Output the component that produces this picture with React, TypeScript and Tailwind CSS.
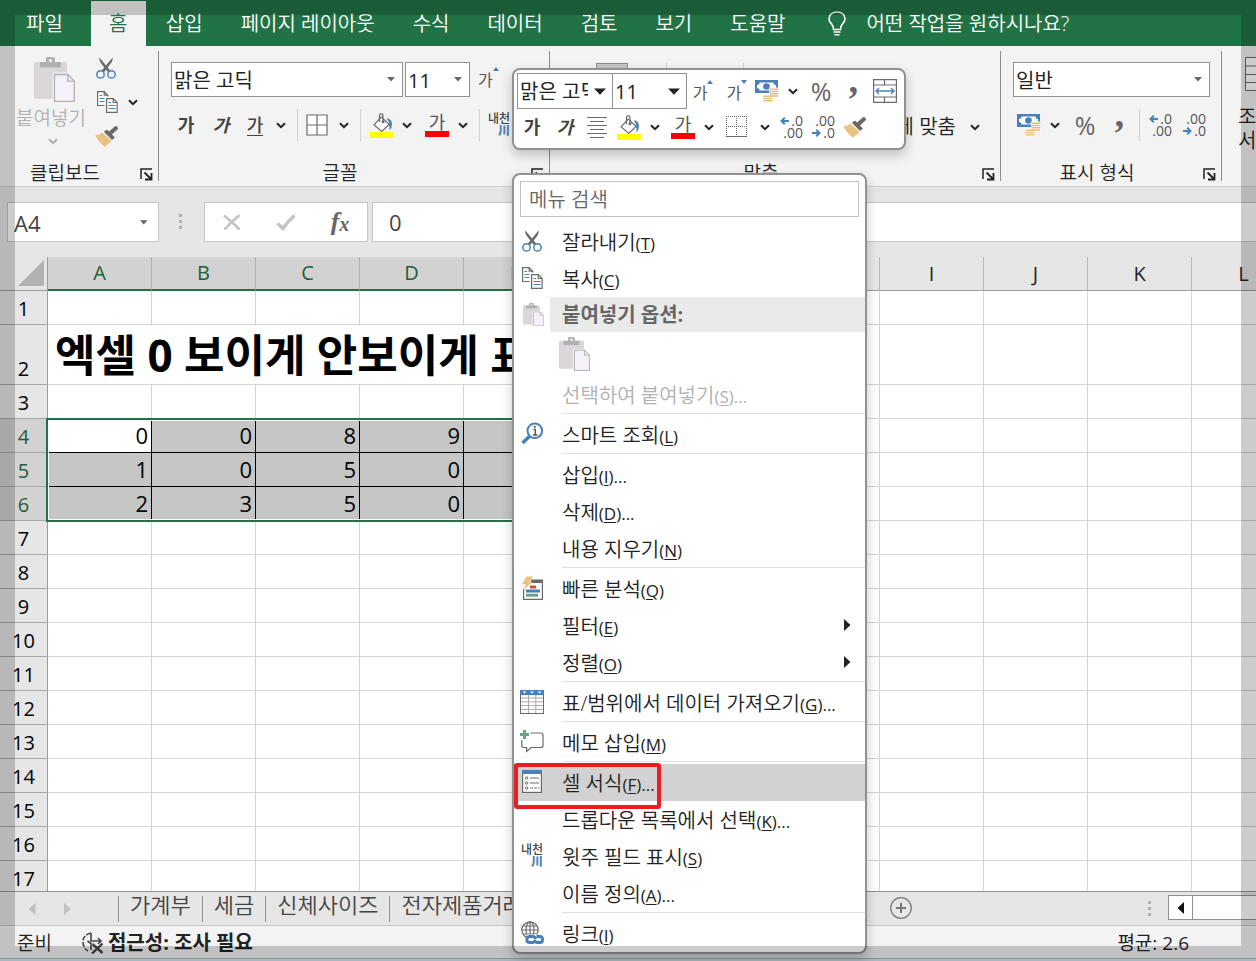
import React from "react";

const BLUE = "#4a80b8";
const GRAY = "#6a6a6a";

/* ---------- icons ---------- */

function Chevron({ className = "text-[#222]" }: { className?: string }) {
  return (
    <svg width="10" height="7" viewBox="0 0 10 7" className={className} aria-hidden="true">
      <path d="M1 1.2 5 5.2 9 1.2" fill="none" stroke="currentColor" strokeWidth="2" />
    </svg>
  );
}

function Triangle({ big = false }: { big?: boolean }) {
  return big ? (
    <svg width="12" height="7" viewBox="0 0 12 7" aria-hidden="true">
      <path d="M0 .5h12L6 6.8z" fill="#222" />
    </svg>
  ) : (
    <svg width="8" height="5" viewBox="0 0 8 5" aria-hidden="true">
      <path d="M0 0h8L4 4.5z" fill="#666" />
    </svg>
  );
}

function Scissors() {
  return (
    <svg width="20" height="22" viewBox="0 0 20 22" aria-hidden="true">
      <path d="M3.4 0.6C3 3 4 5 5.6 7l6.2 8 2.4-1.6z" fill={GRAY} />
      <path d="M16.6 0.6C17 3 16 5 14.4 7l-6.2 8-2.4-1.6z" fill={GRAY} />
      <circle cx="4.5" cy="17.4" r="3.7" fill="none" stroke={BLUE} strokeWidth="1.5" />
      <circle cx="15.5" cy="17.4" r="3.7" fill="none" stroke={BLUE} strokeWidth="1.5" />
    </svg>
  );
}

function Copy() {
  return (
    <svg width="21" height="22" viewBox="0 0 21 22" aria-hidden="true">
      <path d="M7.5 14.5H.6V.6h6.6l3.6 3.6v1.3M7.2.6v3.6h3.6" fill="#fff" stroke={GRAY} strokeWidth="1.2" />
      <path d="M9.6 7.6h6.6l3.9 3.9v9.8H9.6z" fill="#fff" stroke={GRAY} strokeWidth="1.2" />
      <path d="M16.2 7.6v3.9h3.9" fill="none" stroke={GRAY} strokeWidth="1.2" />
      <path d="M2.5 4.5H5M2.5 7.5h5M2.5 10.5h5M11.5 11.5H14M11.5 14.5h7M11.5 17.5h7" stroke={BLUE} strokeWidth="1.2" />
    </svg>
  );
}

function Clipboard({ width, height }: { width: number; height: number }) {
  return (
    <svg width={width} height={height} viewBox="0 0 41 45" aria-hidden="true">
      <rect x="0" y="5" width="33" height="37" rx="1.5" fill="#dad6da" />
      <path d="M6 5h6V1.5Q12 0 13.5 0h6Q21 0 21 1.5V5h6v5.500H6z" fill="#b1b1b1" />
      <circle cx="16.5" cy="3.6" r="1.6" fill="#f3f3f3" />
      <path d="M18.500 15.500H35l6 6V45H18.500z" fill="#f3f3f3" />
      <path d="M20.500 17.500h13.2l6.600 6.600v20.200H20.500z" fill="#f6f1f8" stroke="#b1b1b1" strokeWidth="1.300" />
      <path d="M33.700 17.500v6.600h6.600" fill="none" stroke="#b1b1b1" strokeWidth="1.300" />
    </svg>
  );
}

function Brush() {
  return (
    <svg width="23" height="21" viewBox="0 0 23 21" aria-hidden="true">
      <path d="M.3 9.200Q4 9.500 7.500 6.800L16.700 15 9.800 20.700Q4 16.500.3 9.200z" fill="#ebc27d" />
      <path d="M8.800 5.800 12 3.400l8 8-3 2.600z" fill={GRAY} />
      <path d="M15 7.500 20.800 2.300" stroke={GRAY} strokeWidth="4.200" strokeLinecap="round" />
    </svg>
  );
}

function Borders() {
  return (
    <svg width="22" height="22" viewBox="0 0 22 22" aria-hidden="true">
      <path d="M1 1h20v20H1zM11 1v20M1 11h20" fill="#fff" stroke={GRAY} strokeWidth="1.200" />
    </svg>
  );
}

function DottedBorders() {
  return (
    <svg width="22" height="22" viewBox="0 0 22 22" shapeRendering="crispEdges" aria-hidden="true">
      <path d="M0 .5h21M0 10.500h21M.5 0v20M10.500 0v20M20.500 0v20" stroke="#666" strokeDasharray="1 1" />
      <path d="M0 20.500h21" stroke={GRAY} />
    </svg>
  );
}

function FillColor() {
  return (
    <svg width="24" height="25" viewBox="0 0 24 25" aria-hidden="true">
      <path d="M4 11.800 11.200 4l8 7.300-7.500 7.200z" fill="#fff" stroke={GRAY} strokeWidth="1.200" />
      <path d="M9.500 9V2Q9.500.8 11.200.8T13 2v7" fill="none" stroke={GRAY} strokeWidth="1.200" />
      <circle cx="13" cy="8.800" r="1.500" fill={GRAY} />
      <path d="M16.500 5Q22 6 22 11q0 4-2.500 6.500.5-4-1-6.500l1-1z" fill={BLUE} />
      <rect x="0" y="19" width="24" height="6" fill="#ff0" />
    </svg>
  );
}

function Cash() {
  return (
    <svg width="24" height="23" viewBox="0 0 24 23" aria-hidden="true">
      <rect x="0" y="0" width="23" height="13" fill={BLUE} />
      <path d="M4.500 2.500h14q0 2.500 2.500 2.500v3q-2.500 0-2.500 2.500h-14Q4.500 8 2 8V5q2.500 0 2.500-2.500z" fill="#fff" />
      <circle cx="11.500" cy="6.500" r="3.300" fill={BLUE} />
      <rect x="14" y="7.500" width="10" height="10" fill="#fff" />
      <rect x="7.500" y="14.500" width="10" height="8" fill="#fff" />
      <path d="M15 9.200h8M14.500 11.500h8M15 13.800h8M14.500 16h8M9 16.200h8M8.500 18.500h8M9 20.800h8" stroke="#e8be78" strokeWidth="1.600" strokeLinecap="round" />
    </svg>
  );
}

function MergeCells() {
  return (
    <svg width="24" height="24" viewBox="0 0 24 24" aria-hidden="true">
      <path d="M.6.6h22.800v22.800H.6zM.6 6h22.800M.6 18h22.800M11.500.6V6M11.500 18v5.400" fill="#fff" stroke={GRAY} strokeWidth="1.200" />
      <path d="M3 12h18M6 9l-3 3 3 3M18 9l3 3-3 3" fill="none" stroke={BLUE} strokeWidth="1.400" />
    </svg>
  );
}

function CenterLines() {
  return (
    <svg width="20" height="21" viewBox="0 0 20 21" aria-hidden="true">
      <path d="M0 .5h20M3 4.500h14M0 8.500h20M3 12.500h14M0 16.500h20M3 20.500h14" stroke={GRAY} />
    </svg>
  );
}

function SmartLookup() {
  return (
    <svg width="23" height="23" viewBox="0 0 23 23" aria-hidden="true">
      <circle cx="13.800" cy="8.800" r="7.300" fill="#fff" stroke={BLUE} strokeWidth="2" />
      <path d="M8.500 14.200 1.500 21" stroke={BLUE} strokeWidth="3.600" />
      <path d="M12.500 7.500h1.800v5.500M12 13h4.500" fill="none" stroke="#555" strokeWidth="1.400" />
      <circle cx="13.800" cy="4.800" r="1.100" fill="#555" />
    </svg>
  );
}

function QuickAnalysis() {
  return (
    <svg width="23" height="24" viewBox="0 0 23 24" aria-hidden="true">
      <path d="M2.600 13v10.300h18.800V5" fill="#fff" stroke={GRAY} strokeWidth="1.200" />
      <rect x="10" y="3.500" width="12" height="3.500" fill={GRAY} />
      <rect x="9" y="9.500" width="6" height="3" fill="#d35230" />
      <rect x="5" y="13.500" width="14" height="3" fill={BLUE} />
      <rect x="5" y="17.700" width="12" height="3" fill="#6aa58a" />
      <path d="M5.500.5h6.700L8.300 5.800h3.200L2.300 14.500 5 8.300H1z" fill="#ebc27d" />
    </svg>
  );
}

function TableIcon() {
  return (
    <svg width="24" height="24" viewBox="0 0 24 24" aria-hidden="true">
      <rect x=".5" y=".5" width="23" height="23" fill="#fff" stroke={GRAY} />
      <path d="M1 8h22M1 11.800h22M1 15.600h22M1 19.400h22M8.500 5v18M15.800 5v18" stroke="#aaa" />
      <rect x="0" y="0" width="24" height="5" fill={BLUE} />
      <path d="M2.500 1.500h4l-2 2zM10 1.500h4l-2 2zM17.500 1.500h4l-2 2z" fill="#fff" />
    </svg>
  );
}

function Comment() {
  return (
    <svg width="24" height="23" viewBox="0 0 24 23" aria-hidden="true">
      <path d="M10.500 3H21q2 0 2 2v10.500q0 2-2 2h-10L6.600 21.500v-4H3.800q-2 0-2-2V10" fill="#fff" stroke={GRAY} strokeWidth="1.200" />
      <path d="M4.500 0v9M0 4.500h9" stroke="#6aa58a" strokeWidth="3" />
    </svg>
  );
}

function FormatCells() {
  return (
    <svg width="20" height="23" viewBox="0 0 20 23" aria-hidden="true">
      <rect x=".6" y=".6" width="18.800" height="21.800" fill="#fff" stroke={GRAY} strokeWidth="1.200" />
      <rect x="0" y="0" width="20" height="4" fill={BLUE} />
      <path d="M8 8h9M8 13h9M8 18h3M12 18h3M16 18h1.500" stroke={GRAY} strokeWidth="1.200" />
      <g fill="none" stroke={GRAY}>
        <circle cx="4.700" cy="8" r="1.200" />
        <circle cx="4.700" cy="13" r="1.200" />
        <circle cx="4.700" cy="18" r="1.200" />
      </g>
    </svg>
  );
}

function LinkIcon() {
  return (
    <svg width="23" height="24" viewBox="0 0 23 24" aria-hidden="true">
      <g fill="none" stroke={GRAY} strokeWidth="1.200">
        <circle cx="9" cy="9" r="8.200" fill="#fff" />
        <ellipse cx="9" cy="9" rx="4" ry="8.200" />
        <path d="M9 1v16M1 9h16M2.300 5h13.400M2.300 13h13.400" />
      </g>
      <path d="M5.500 13.500H23V24H5.500z" fill="#fff" />
      <g fill="none" stroke={BLUE} strokeWidth="3">
        <path d="M13 21.500H9q-3.200 0-3.200-3t3.200-3h2.500q2.500 0 3.200 2.500" />
        <path d="M15.500 15.500H19q2.500 0 2.500 3t-2.500 3h-2.500q-2.500 0-3.200-2.500" />
      </g>
    </svg>
  );
}

function Bulb() {
  return (
    <svg width="18" height="25" viewBox="0 0 18 25" aria-hidden="true">
      <path d="M5.500 18.500Q5.500 15 3.300 12.600 1 10.500 1 7.800 1.500 1 9 1t8 6.800q0 2.700-2.300 4.800-2.200 2.400-2.200 5.900z" fill="none" stroke="#fff" strokeWidth="1.600" />
      <path d="M5.500 21h7M6.500 23.700h5" stroke="#fff" strokeWidth="1.500" />
    </svg>
  );
}

function Launcher() {
  return (
    <svg width="13" height="13" viewBox="0 0 13 13" aria-hidden="true">
      <path d="M1 11V1h11" fill="none" stroke="#222" strokeWidth="1.500" />
      <path d="M4.500 4.500 11 11M11.500 5v6.500H5" fill="none" stroke="#222" strokeWidth="1.800" />
    </svg>
  );
}

function Ruby() {
  return (
    <span className="flex w-[22px] flex-col items-end" aria-hidden="true">
      <span className="whitespace-nowrap text-[12px] font-medium leading-[12px] text-[#444]">내천</span>
      <span className="text-[12px] font-black leading-[12px] text-[#4a80b8]">川</span>
    </span>
  );
}

function Arrow({ dir }: { dir: "left" | "right" }) {
  return (
    <svg width="9" height="8" viewBox="0 0 9 8" aria-hidden="true">
      <path d={dir === "left" ? "M9 4H1.500M4.800.7 1.500 4l3.300 3.300" : "M0 4h7.500M4.200.7 7.500 4 4.200 7.300"} fill="none" stroke={BLUE} strokeWidth="2" />
    </svg>
  );
}

function Decimal({ more = false }: { more?: boolean }) {
  return (
    <span className="flex w-6 flex-col items-end text-[14px] font-normal leading-[12px] text-[#555]">
      {more ? (
        <>
          <span className="flex items-center gap-0.5"><Arrow dir="left" />.0</span>
          <span>.00</span>
        </>
      ) : (
        <>
          <span>.00</span>
          <span className="flex items-center gap-0.5"><Arrow dir="right" />.0</span>
        </>
      )}
    </span>
  );
}

function FontColor() {
  return (
    <span className="flex w-6 flex-col items-center">
      <span className="text-[18px] font-normal leading-[18px] text-[#555]">가</span>
      <span className="h-1.5 w-6 bg-[#f00]" />
    </span>
  );
}

function SizeStep({ up = false }: { up?: boolean }) {
  return (
    <span className="flex items-start font-normal text-[#555]">
      <span className="pt-1 text-[16px] leading-[18px]">가</span>
      <svg width="6" height="4" viewBox="0 0 6 4" aria-hidden="true">
        <path d={up ? "M0 4h6L3 0z" : "M0 0h6L3 4z"} fill={BLUE} />
      </svg>
    </span>
  );
}

function Comma() {
  return <span className="h-4 font-['Liberation_Serif',serif] text-[38px] font-bold leading-[32px] text-[#666]">’</span>;
}

/* ---------- controls ---------- */

function Tool({ label, className = "", children }: { label: string; className?: string; children: React.ReactNode }) {
  return (
    <button type="button" aria-label={label} className={`flex h-8 shrink-0 items-center justify-center ${className}`}>
      {children}
    </button>
  );
}

function Divider({ className = "" }: { className?: string }) {
  return <span className={`h-8 w-px shrink-0 bg-[#cfcfcf] ${className}`} />;
}

function Combo({ label, value, options, className = "", big = false }: { label: string; value: string; options: string[]; className?: string; big?: boolean }) {
  return (
    <label className={`grid shrink-0 items-center border border-[#919191] bg-white ${className}`}>
      <select
        aria-label={label}
        defaultValue={value}
        className={`col-start-1 row-start-1 h-full w-full min-w-0 appearance-none overflow-hidden bg-transparent pl-0.5 pt-0.5 text-[20px] font-normal text-[#222] outline-none ${big ? "pr-6" : "pr-5"}`}
      >
        {options.map((o) => <option key={o}>{o}</option>)}
      </select>
      <span className={`pointer-events-none col-start-1 row-start-1 justify-self-end ${big ? "pr-1.5" : "pr-[7px]"}`}>
        <Triangle big={big} />
      </span>
    </label>
  );
}

function Group({ label, className, children, launcher = true }: { label: string; className: string; children: React.ReactNode; launcher?: boolean }) {
  return (
    <section aria-label={label} className={`flex h-[130px] shrink-0 flex-col border-r border-[#8c8c8c] ${className}`}>
      <div className="min-h-0 flex-1">{children}</div>
      <div className="flex h-[18px] items-center">
        <span className="flex-1 whitespace-nowrap pr-2.5 pt-0.5 text-center text-[19px] leading-[18px]">{label}</span>
        {launcher && <button type="button" aria-label={`${label} 설정`} className="self-end pr-[5px]"><Launcher /></button>}
      </div>
    </section>
  );
}

/* ---------- data ---------- */

const TABS_AFTER = ["삽입", "페이지 레이아웃", "수식", "데이터", "검토", "보기", "도움말"];
const COLUMNS = ["A", "B", "C", "D", "E", "F", "G", "H", "I", "J", "K", "L"];
const ROWS = Array.from({ length: 17 }, (_, i) => i + 1);
const VALUES: Record<number, number[]> = { 4: [0, 0, 8, 9], 5: [1, 0, 5, 0], 6: [2, 3, 5, 0] };
const SELECTED_COLUMNS = 7;
const TITLE_SPAN = 7;
const SHEETS = ["가계부", "세금", "신체사이즈", "전자제품거래"];

type Entry =
  | { kind: "item"; text: string; hot: string; more?: boolean; icon?: React.ReactNode; sub?: boolean; off?: boolean; active?: boolean }
  | { kind: "line" }
  | { kind: "paste" };

const MENU: Entry[] = [
  { kind: "item", text: "잘라내기", hot: "T", icon: <Scissors /> },
  { kind: "item", text: "복사", hot: "C", icon: <Copy /> },
  { kind: "paste" },
  { kind: "item", text: "선택하여 붙여넣기", hot: "S", more: true, off: true },
  { kind: "line" },
  { kind: "item", text: "스마트 조회", hot: "L", icon: <SmartLookup /> },
  { kind: "line" },
  { kind: "item", text: "삽입", hot: "I", more: true },
  { kind: "item", text: "삭제", hot: "D", more: true },
  { kind: "item", text: "내용 지우기", hot: "N" },
  { kind: "line" },
  { kind: "item", text: "빠른 분석", hot: "Q", icon: <QuickAnalysis /> },
  { kind: "item", text: "필터", hot: "E", sub: true },
  { kind: "item", text: "정렬", hot: "O", sub: true },
  { kind: "line" },
  { kind: "item", text: "표/범위에서 데이터 가져오기", hot: "G", more: true, icon: <TableIcon /> },
  { kind: "line" },
  { kind: "item", text: "메모 삽입", hot: "M", icon: <Comment /> },
  { kind: "line" },
  { kind: "item", text: "셀 서식", hot: "F", more: true, icon: <FormatCells />, active: true },
  { kind: "item", text: "드롭다운 목록에서 선택", hot: "K", more: true },
  { kind: "item", text: "윗주 필드 표시", hot: "S", icon: <Ruby /> },
  { kind: "item", text: "이름 정의", hot: "A", more: true },
  { kind: "line" },
  { kind: "item", text: "링크", hot: "I", icon: <LinkIcon /> },
];

/* ---------- sections ---------- */

function TabBar() {
  return (
    <nav className="flex h-[46px] shrink-0 overflow-hidden whitespace-nowrap bg-[#217346] pt-px text-white">
      <button type="button" className="ml-1.5 px-5">파일</button>
      <button type="button" className="ml-2 mr-px w-[55px] bg-[#f3f3f3] text-[#217346]">홈</button>
      {TABS_AFTER.map((t) => <button type="button" key={t} className="px-[19px]">{t}</button>)}
      <button type="button" className="ml-6 flex items-center gap-5">
        <Bulb />
        어떤 작업을 원하시나요?
      </button>
    </nav>
  );
}

function Ribbon() {
  return (
    <div className="flex h-[141px] shrink-0 overflow-hidden border-b border-[#cfcfcf] bg-[#f3f3f3] pt-[5px] text-[#222]">
      <Group label="클립보드" className="w-[159px]">
        <div className="flex pl-[15px] pt-1.5">
          <button type="button" className="flex w-[72px] flex-col items-center whitespace-nowrap text-[#b1b1b1]">
            <span className="pl-1.5"><Clipboard width={41} height={45} /></span>
            <span className="text-[19px] leading-[32px]">붙여넣기</span>
            <span className="pl-1 pt-1"><Chevron className="text-[#b1b1b1]" /></span>
          </button>
          <div className="flex flex-col gap-3 pl-2">
            <button type="button" aria-label="잘라내기" className="pl-px"><Scissors /></button>
            <div className="flex items-center gap-2.5">
              <button type="button" aria-label="복사" className="pl-0.5"><Copy /></button>
              <button type="button" aria-label="복사 옵션"><Chevron /></button>
            </div>
            <button type="button" aria-label="서식 복사" className="pt-px"><Brush /></button>
          </div>
        </div>
      </Group>

      <Group label="글꼴" className="w-[391px]">
        <div className="flex items-start gap-0.5 pl-3 pt-[11px]">
          <Combo label="글꼴" value="맑은 고딕" options={["맑은 고딕", "굴림"]} className="h-[35px] w-[232px]" />
          <Combo label="글꼴 크기" value="11" options={["11", "12"]} className="h-[35px] w-[65px]" />
          <Tool label="글꼴 크기 크게" className="ml-1.5"><SizeStep up /></Tool>
        </div>
        <div className="flex items-center pl-3 pt-3">
          <Tool label="굵게" className="w-[30px] text-[18px] font-bold text-[#444]">가</Tool>
          <Tool label="기울임꼴" className="w-10 text-[18px] font-bold italic text-[#444]">가</Tool>
          <Tool label="밑줄" className="w-7"><span className="border-b border-[#444] text-[18px] font-medium leading-[20px] text-[#444]">가</span></Tool>
          <Tool label="밑줄 옵션" className="w-6"><Chevron /></Tool>
          <Divider className="ml-1" />
          <Tool label="테두리" className="w-[38px]"><Borders /></Tool>
          <Tool label="테두리 옵션" className="w-4"><Chevron /></Tool>
          <Divider className="ml-2 mr-1" />
          <Tool label="채우기 색" className="w-[34px]"><FillColor /></Tool>
          <Tool label="채우기 색 옵션" className="w-4"><Chevron /></Tool>
          <Tool label="글꼴 색" className="ml-1 w-9"><FontColor /></Tool>
          <Tool label="글꼴 색 옵션" className="w-4"><Chevron /></Tool>
          <Divider className="ml-2" />
          <Tool label="윗주" className="ml-2"><Ruby /></Tool>
        </div>
      </Group>

      <Group label="맞춤" className="w-[451px]">
        <div className="flex items-start pl-[46px] pt-3">
          <Tool label="위쪽 맞춤" className="w-8 border border-[#8c8c8c] bg-[#c6c6c6]"><CenterLines /></Tool>
          <Divider className="ml-[38px]" />
          <Tool label="방향" className="ml-4 w-8"><CenterLines /></Tool>
          <Divider className="ml-7" />
        </div>
        <div className="flex justify-end pr-5 pt-4">
          <button type="button" className="flex h-8 items-center gap-3.5 whitespace-nowrap">
            병합하고 가운데 맞춤
            <Chevron />
          </button>
        </div>
      </Group>

      <Group label="표시 형식" className="w-[221px]">
        <div className="pl-3 pt-[11px]">
          <Combo label="표시 형식" value="일반" options={["일반", "숫자"]} className="h-[35px] w-[197px]" />
        </div>
        <div className="flex items-center pl-3 pt-3">
          <Tool label="회계 표시 형식" className="w-8"><Cash /></Tool>
          <Tool label="회계 옵션" className="w-5"><Chevron /></Tool>
          <Tool label="백분율" className="w-10 text-[25px] font-normal text-[#666]">%</Tool>
          <Tool label="쉼표 스타일" className="w-7"><Comma /></Tool>
          <Divider className="ml-1.5" />
          <Tool label="자릿수 늘림" className="ml-2"><Decimal more /></Tool>
          <Tool label="자릿수 줄임" className="ml-2.5"><Decimal /></Tool>
        </div>
      </Group>

      <button type="button" className="flex shrink-0 flex-col items-start whitespace-nowrap pl-4 pt-1.5 text-left leading-[24px]">
        <span className="pb-3.5 pl-[7px]">
          <svg width="34" height="34" viewBox="0 0 34 34" aria-hidden="true">
            <path d="M.5.5h33v33H.5zM.5 9h33M.5 17.500h33M.5 25.500h33M17 .5v33" fill="#fff" stroke={GRAY} />
          </svg>
        </span>
        <span>조건부</span>
        <span>서식</span>
      </button>
    </div>
  );
}

function Dots({ className = "" }: { className?: string }) {
  return (
    <span className={`flex flex-col gap-[3px] ${className}`}>
      <span className="size-[3px] bg-[#b0b0b0]" />
      <span className="size-[3px] bg-[#b0b0b0]" />
      <span className="size-[3px] bg-[#b0b0b0]" />
    </span>
  );
}

function FormulaBar() {
  return (
    <div className="flex h-[70px] shrink-0 items-start bg-[#e6e6e6] pl-[7px] pt-[15px] font-normal">
      <div className="flex h-10 w-[152px] shrink-0 items-center border border-[#c6c6c6] bg-white pr-2.5">
        <input aria-label="이름 상자" defaultValue="A4" className="h-full w-full min-w-0 bg-transparent pl-1.5 pt-0.5 text-[22px] text-[#444] outline-none" />
        <Triangle />
      </div>
      <Dots className="ml-5 mr-[18px] mt-3" />
      <div className="ml-1 flex h-10 w-[164px] shrink-0 items-center border border-[#c6c6c6] bg-white">
        <Tool label="취소" className="w-[54px]">
          <svg width="18" height="17" viewBox="0 0 18 17" aria-hidden="true">
            <path d="M1 1.500Q8 7 16.500 15.500M16.500 1Q8 8 1.500 15.500" fill="none" stroke="#c3c3c3" strokeWidth="2.600" />
          </svg>
        </Tool>
        <Tool label="입력" className="w-[54px]">
          <svg width="20" height="17" viewBox="0 0 20 17" aria-hidden="true">
            <path d="M1.500 9.500 7 14.500Q12 7 18.500 1.500" fill="none" stroke="#c3c3c3" strokeWidth="3.400" />
          </svg>
        </Tool>
        <Tool label="함수 삽입" className="w-[54px] font-['Liberation_Serif',serif] text-[26px] font-bold italic text-[#666]">
          f<span className="pt-1 text-[20px]">x</span>
        </Tool>
      </div>
      <input aria-label="수식 입력줄" defaultValue="0" className="ml-1 h-10 min-w-0 flex-1 border border-r-0 border-[#c6c6c6] bg-white pl-4 text-[22px] text-[#444] outline-none" />
    </div>
  );
}

function Sheet() {
  return (
    <main className="relative min-h-0 flex-1 overflow-hidden bg-white font-normal">
      <table className="w-[1296px] table-fixed border-separate border-spacing-0 text-[20px] leading-[26px]">
        <colgroup>
          <col className="w-12" />
          {COLUMNS.map((c) => <col key={c} className="w-[104px]" />)}
        </colgroup>
        <thead>
          <tr className="h-[34px]">
            <th className="border-b border-r border-b-[#9b9b9b] border-r-[#9b9b9b] bg-[#e6e6e6] p-0">
              <svg width="26" height="27" viewBox="0 0 26 27" className="ml-auto mr-[3px]" aria-hidden="true">
                <path d="M26 0v26H0z" fill="#b2b2b2" />
              </svg>
            </th>
            {COLUMNS.map((c, i) => (
              <th
                key={c}
                scope="col"
                className={`border-r p-0 font-normal ${i < SELECTED_COLUMNS ? "border-b-2 border-b-[#217346] border-r-[#b0b0b0] bg-[#d2d2d2] text-[#1a6038]" : "border-b border-b-[#9b9b9b] border-r-[#b8b8b8] bg-[#e6e6e6] text-[#222]"}`}
              >
                {c}
              </th>
            ))}
          </tr>
        </thead>
        <tbody>
          {ROWS.map((r) => {
            const values = VALUES[r];
            const inRange = r >= 4 && r <= 6;
            const cells = r === 2 ? COLUMNS.slice(TITLE_SPAN) : COLUMNS;
            return (
              <tr key={r} className={r === 2 ? "h-[60px]" : "h-[34px]"}>
                <th scope="row" className={`border-b border-r border-r-[#9b9b9b] p-0 align-bottom font-normal leading-[30px] ${inRange ? "border-b-[#a8a8a8] bg-[#d2d2d2] text-[#1a6038]" : "border-b-[#a8a8a8] bg-[#e6e6e6] text-black"}`}>
                  {r}
                </th>
                {r === 2 && (
                  <td colSpan={TITLE_SPAN} className="whitespace-nowrap border-b border-[#d4d4d4] p-0 pl-[7px] text-[44px] font-bold leading-[56px] text-black">
                    엑셀 0 보이게 안보이게 표시하기
                  </td>
                )}
                {cells.map((c, i) => (
                  <td
                    key={c}
                    className={`border-b border-r p-0 pr-[3px] text-right align-bottom text-[22px] leading-[33px] text-black ${
                      inRange && i < SELECTED_COLUMNS ? `border-black ${r === 4 && i === 0 ? "bg-white" : "bg-[#c6c6c6]"}` : "border-[#d4d4d4]"
                    }`}
                  >
                    {values ? values[i] : null}
                  </td>
                ))}
              </tr>
            );
          })}
        </tbody>
      </table>
      <div className="pointer-events-none absolute left-[46px] top-[161px] h-[104px] w-[731px] border-2 border-[#217346] shadow-[inset_0_0_0_1px_#fff]" />
    </main>
  );
}

function SheetTabs() {
  return (
    <div className="flex h-[34px] shrink-0 items-center border-t border-[#919191] bg-[#e6e6e6] text-[22px] text-[#444]">
      <button type="button" aria-label="이전 시트" className="ml-7">
        <svg width="8" height="12" viewBox="0 0 8 12" aria-hidden="true"><path d="M7.500 0v12L.5 6z" fill="#c0c0c0" /></svg>
      </button>
      <button type="button" aria-label="다음 시트" className="ml-7">
        <svg width="8" height="12" viewBox="0 0 8 12" aria-hidden="true"><path d="M0 0v12l7-6z" fill="#c0c0c0" /></svg>
      </button>
      <div className="ml-[46px] flex w-[772px] overflow-hidden whitespace-nowrap">
        {SHEETS.map((s) => (
          <button type="button" key={s} className="flex h-[26px] items-start border-l border-[#919191] px-[11px] leading-[16px]">{s}</button>
        ))}
      </div>
      <button type="button" aria-label="새 시트" className="pb-0.5">
        <svg width="22" height="22" viewBox="0 0 22 22" aria-hidden="true">
          <circle cx="11" cy="11" r="10.300" fill="none" stroke="#777" strokeWidth="1.200" />
          <path d="M11 6v10M6 11h10" stroke="#777" strokeWidth="2" />
        </svg>
      </button>
      <Dots className="ml-auto" />
      <div className="mb-0.5 ml-[17px] flex h-[25px] w-[88px] border border-r-0 border-[#919191] bg-white">
        <button type="button" aria-label="왼쪽으로 스크롤" className="flex w-6 items-center justify-center border-r border-[#919191]">
          <svg width="7" height="12" viewBox="0 0 7 12" aria-hidden="true"><path d="M7 0v12L.5 6z" fill="#111" /></svg>
        </button>
      </div>
    </div>
  );
}

function StatusBar() {
  return (
    <footer className="flex h-9 shrink-0 flex-col bg-[#f3f3f3] text-[19px] text-[#222]">
      <div className="flex h-[33px] items-center whitespace-nowrap border-t border-[#c6c6c6] pl-[17px] pt-0.5">
        <span>준비</span>
        <button type="button" className="ml-[30px] flex items-center gap-1 text-[20px] font-bold">
          <svg width="22" height="22" viewBox="0 0 22 22" aria-hidden="true">
            <path d="M9 1Q1 3 1 10q0 6 5 9" fill="none" stroke="#444" strokeWidth="1.600" strokeDasharray="5 1.500" />
            <path d="M9 1v8h10M16 6l3 3-3 3M5.500 9l3.500 2.500V18" fill="none" stroke="#444" strokeWidth="1.600" />
            <path d="M10.500 12 20.500 21M20.500 11.500 10 21.500" stroke="#444" strokeWidth="2.400" />
          </svg>
          접근성: 조사 필요
        </button>
        <span className="ml-auto pr-[67px] font-normal">평균: 2.6</span>
      </div>
      <div className="h-[3px] border-t border-[#aeb6ba] bg-[#d2e6f0]" />
    </footer>
  );
}

function MiniToolbar() {
  return (
    <div role="toolbar" aria-label="미니 도구 모음" className="absolute left-[512px] top-[68px] flex w-[394px] flex-col rounded-lg border-2 border-[#919191] bg-white pb-[5px] pl-[3px] pt-[3px] text-[#222] shadow-[0_5px_12px_rgba(0,0,0,0.22)]">
      <div className="flex items-center">
        <Combo big label="글꼴" value="맑은 고딕" options={["맑은 고딕", "굴림"]} className="h-9 w-[96px]" />
        <Combo big label="글꼴 크기" value="11" options={["11", "12"]} className="-ml-px h-9 w-[75px]" />
        <Tool label="글꼴 크기 크게" className="ml-1 w-6"><SizeStep up /></Tool>
        <Tool label="글꼴 크기 작게" className="ml-2.5 w-6"><SizeStep /></Tool>
        <Tool label="회계 표시 형식" className="ml-0.5 w-8"><Cash /></Tool>
        <Tool label="회계 옵션" className="w-5"><Chevron /></Tool>
        <Tool label="백분율" className="w-9 text-[25px] font-normal text-[#666]">%</Tool>
        <Tool label="쉼표 스타일" className="w-7"><Comma /></Tool>
        <Tool label="병합" className="w-9"><MergeCells /></Tool>
      </div>
      <div className="flex items-center pt-0.5">
        <Tool label="굵게" className="w-[30px] text-[18px] font-bold text-[#444]">가</Tool>
        <Tool label="기울임꼴" className="w-9 text-[18px] font-bold italic text-[#444]">가</Tool>
        <Tool label="가운데 맞춤" className="w-[28px]"><CenterLines /></Tool>
        <Tool label="채우기 색" className="w-9"><FillColor /></Tool>
        <Tool label="채우기 색 옵션" className="w-4"><Chevron /></Tool>
        <Tool label="글꼴 색" className="w-10"><FontColor /></Tool>
        <Tool label="글꼴 색 옵션" className="w-3"><Chevron /></Tool>
        <Tool label="테두리" className="w-11"><DottedBorders /></Tool>
        <Tool label="테두리 옵션" className="w-3"><Chevron /></Tool>
        <Tool label="자릿수 늘림" className="ml-2"><Decimal more /></Tool>
        <Tool label="자릿수 줄임" className="ml-2"><Decimal /></Tool>
        <Tool label="서식 복사" className="ml-2"><Brush /></Tool>
      </div>
    </div>
  );
}

function MenuEntry({ entry }: { entry: Entry }) {
  if (entry.kind === "line") {
    return <div role="separator" className="ml-12 h-[3px] border-t border-[#e1e1e1]" />;
  }
  if (entry.kind === "paste") {
    return (
      <div>
        <div className="flex h-[35px] items-center">
          <span className="w-9 pl-[9px]"><Clipboard width={21} height={23} /></span>
          <span className="flex h-full flex-1 items-center bg-[#eaeaea] pl-3 font-bold text-[#666]">붙여넣기 옵션:</span>
        </div>
        <button type="button" aria-label="붙여넣기" className="ml-[45px] block h-11"><Clipboard width={31} height={34} /></button>
      </div>
    );
  }
  return (
    <button
      type="button"
      role="menuitem"
      disabled={entry.off}
      className={`relative flex h-[37px] w-full items-center whitespace-nowrap text-left ${entry.active ? "bg-[#d2d2d2]" : ""} ${entry.off ? "text-[#b1b1b1]" : "text-[#222]"}`}
    >
      <span className="flex w-9 shrink-0 justify-center pb-0.5">{entry.icon}</span>
      <span className="pl-3 pt-1">
        {entry.text}
        <span className="text-[17px] font-normal">(<u className="underline-offset-2">{entry.hot}</u>){entry.more ? "..." : ""}</span>
      </span>
      {entry.sub && (
        <span className="ml-auto pb-0.5 pr-3.5">
          <svg width="7" height="12" viewBox="0 0 7 12" aria-hidden="true"><path d="M0 0v12l6.500-6z" fill="#222" /></svg>
        </span>
      )}
      {entry.active && <span className="pointer-events-none absolute -top-px left-0 h-[46px] w-[147px] rounded-[3px] border-4 border-[#ed1c24]" />}
    </button>
  );
}

function ContextMenu() {
  return (
    <div role="menu" className="absolute left-[512px] top-[173px] w-[355px] rounded-lg border-2 border-[#919191] bg-white pt-[6px] shadow-[0_5px_12px_rgba(0,0,0,0.22)]">
      <input
        aria-label="메뉴 검색"
        placeholder="메뉴 검색"
        className="mx-1.5 mb-1.5 block h-9 w-[339px] border border-[#c0c0c0] bg-white pl-2 text-[20px] text-[#222] outline-none placeholder:text-[#666]"
      />
      {MENU.map((e, i) => <MenuEntry key={i} entry={e} />)}
    </div>
  );
}

export default function App() {
  return (
    <div className="relative flex h-screen flex-col overflow-hidden bg-[#e6e6e6] font-['Open_Sans','Noto_Sans_CJK_KR',sans-serif] text-[20px] font-[350] leading-[28px]">
      <TabBar />
      <Ribbon />
      <FormulaBar />
      <Sheet />
      <SheetTabs />
      <StatusBar />
      <MiniToolbar />
      <ContextMenu />
      <div className="pointer-events-none absolute inset-0 border-[15px] border-black/20" />
    </div>
  );
}
